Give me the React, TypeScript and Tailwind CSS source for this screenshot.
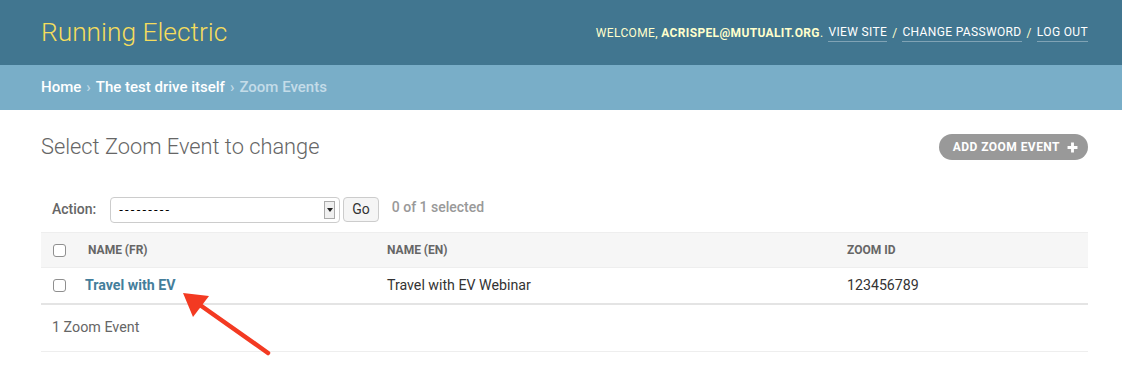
import React from 'react';

const rows = [
    { fr: 'Travel with EV', en: 'Travel with EV Webinar', zoomId: '123456789' },
];

function Checkbox() {
    return <span className="block w-[13px] h-[13px] rounded-[3px] border border-[#8f8f8f] bg-white" />;
}

export default function App() {
    return (
        <div className="w-[1122px] h-[371px] bg-white relative overflow-hidden" style={{ fontFamily: 'Roboto, "Liberation Sans", sans-serif' }}>
            {/* Header */}
            <div className="h-[65px] bg-[#417690] flex items-center justify-between pl-[41px] pr-[34px]">
                <div className="text-[26.3px] font-light text-[#f5dd5d] leading-none">Running Electric</div>
                <div className="text-[12px] tracking-[0.35px] text-[#ffc] uppercase flex items-center gap-[5px]">
                    <span>Welcome, <strong className="font-bold">acrispel@mutualit.org</strong>.</span>
                    <span className="text-white border-b border-[#ffffff55]">View site</span>
                    <span>/</span>
                    <span className="text-white border-b border-[#ffffff55]">Change password</span>
                    <span>/</span>
                    <span className="text-white border-b border-[#ffffff55]">Log out</span>
                </div>
            </div>

            {/* Breadcrumbs */}
            <div className="h-[45px] bg-[#79aec8] flex items-center px-[41px] text-[15px] font-medium text-white">
                <span>Home</span>
                <span className="text-[#c4dce8] mx-[5px]">›</span>
                <span>The test drive itself</span>
                <span className="text-[#c4dce8] mx-[5px]">›</span>
                <span className="text-[#c4dce8]">Zoom Events</span>
            </div>

            {/* Content */}
            <div className="pl-[41px] pr-[34px]">
                <div className="flex items-center justify-between pt-[23px]">
                    <h1 className="text-[21.8px] font-light text-[#666] leading-[28px]">Select Zoom Event to change</h1>
                    <div className="h-[26px] rounded-full bg-[#999] text-white text-[12px] font-bold uppercase tracking-[0.45px] flex items-center pl-[14px] pr-[10px] gap-[7px]">
                        ADD ZOOM EVENT
                        <svg width="11" height="11" viewBox="0 0 10 10"><path d="M5 0.5v9M0.5 5h9" stroke="white" strokeWidth="2.6" /></svg>
                    </div>
                </div>

                {/* Actions */}
                <div className="mt-[35px] flex items-center h-[27px] pl-[11px] text-[14px] text-[#666] font-medium">
                    <span className="mr-[14px]">Action:</span>
                    <div className="w-[230px] h-[26px] border border-[#ccc] rounded-[4px] bg-white flex items-center justify-between pl-[8px] pr-[4px] text-[#000] font-normal">
                        <span className="text-[13px] tracking-[2.2px]">---------</span>
                        <span className="w-[11px] h-[18px] border border-[#aaa] bg-[#f0f0f0] flex items-center justify-center">
                            <svg width="6" height="4" viewBox="0 0 6 4"><path d="M0 0h6L3 4z" fill="#222" /></svg>
                        </span>
                    </div>
                    <div className="ml-[3px] h-[25px] px-[8px] border border-[#ccc] rounded-[4px] bg-[#f5f5f5] text-[#333] font-normal flex items-center text-[14px]">Go</div>
                    <span className="ml-[13px] mb-[4px] text-[#999]">0 of 1 selected</span>
                </div>

                {/* Table */}
                <div className="mt-[9px] w-[1047px]">
                    <div className="h-[36px] bg-[#f6f6f6] border-t border-[#eee] border-b border-[#eee] flex items-center text-[12px] font-bold text-[#666] uppercase">
                        <div className="w-[44px] pl-[12px]"><Checkbox /></div>
                        <div className="w-[302px] pl-[3px]">Name (fr)</div>
                        <div className="w-[460px]">Name (en)</div>
                        <div>Zoom ID</div>
                    </div>
                    {rows.map((r) => (
                        <div key={r.zoomId} className="h-[37px] border-b-2 border-[#e4e4e4] flex items-center text-[14.2px] text-[#333]">
                            <div className="w-[44px] pl-[12px]"><Checkbox /></div>
                            <div className="w-[302px] font-bold text-[#447e9b]">{r.fr}</div>
                            <div className="w-[460px]">{r.en}</div>
                            <div>{r.zoomId}</div>
                        </div>
                    ))}
                    <div className="h-[47px] border-b border-[#eee] flex items-center pl-[11px] text-[14.3px] text-[#666]">1 Zoom Event</div>
                </div>
            </div>

            {/* Red annotation arrow */}
            <svg className="absolute left-0 top-0 pointer-events-none" width="1122" height="371">
                <line x1="268" y1="353" x2="200" y2="305" stroke="#f33a22" strokeWidth="4.5" strokeLinecap="round" />
                <polygon points="183,293 209,296 193,317" fill="#f33a22" />
            </svg>
        </div>
    );
}
